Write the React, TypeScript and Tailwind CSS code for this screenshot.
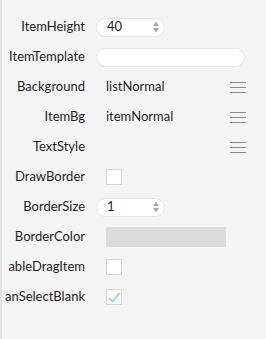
import React from 'react'

const Spinner = ({ value }: { value: string }) => (
  <div className="flex h-[19px] w-[69px] items-center justify-between rounded-full border border-[#e6e6e6] bg-white pl-[10px] pr-[5px]">
    <span>{value}</span>
    <svg width="6" height="12" viewBox="0 0 6 12" className="text-[#a8a8a8]">
      <path d="M3 0.5 L6 5 H0 Z" fill="currentColor" />
      <path d="M3 11.5 L6 7 H0 Z" fill="currentColor" />
    </svg>
  </div>
)

const Menu = () => (
  <div className="ml-auto mr-[20px] flex w-[16px] flex-col gap-[4px]">
    <div className="h-[1px] bg-[#8a8a8a]" />
    <div className="h-[1px] bg-[#8a8a8a]" />
    <div className="h-[1px] bg-[#8a8a8a]" />
  </div>
)

const Check = ({ checked }: { checked?: boolean }) => (
  <div className="ml-[10px] flex h-[16px] w-[16px] items-center justify-center border border-[#d4d4d4] bg-white">
    {checked && (
      <svg width="14" height="14" viewBox="0 0 14 14">
        <path d="M2 8 L5.5 11.5 L12.5 3" fill="none" stroke="#7cc4f0" strokeWidth="1.4" />
      </svg>
    )}
  </div>
)

const Row = ({ label, children }: { label: string; children?: React.ReactNode }) => (
  <div className="flex h-[30px] items-center">
    <div className="w-[83px] shrink-0 whitespace-nowrap text-right">{label}</div>
    <div className="ml-[11px] flex flex-1 items-center">{children}</div>
  </div>
)

export default function App() {
  return (
    <div
      className="h-[339px] w-[266px] border-l-2 border-[#e2e2e2] bg-[#f4f4f4] pt-[12px] text-[13px] text-[#1e1e1e]"
      style={{ fontFamily: 'Lato, "Noto Sans", sans-serif' }}
    >
      <Row label="ItemHeight">
        <Spinner value="40" />
      </Row>
      <Row label="ItemTemplate">
        <div className="h-[19px] w-[149px] rounded-full border border-[#e6e6e6] bg-white" />
      </Row>
      <Row label="Background">
        <span className="pl-[10px]">listNormal</span>
        <Menu />
      </Row>
      <Row label="ItemBg">
        <span className="pl-[10px]">itemNormal</span>
        <Menu />
      </Row>
      <Row label="TextStyle">
        <Menu />
      </Row>
      <Row label="DrawBorder">
        <Check />
      </Row>
      <Row label="BorderSize">
        <Spinner value="1" />
      </Row>
      <Row label="BorderColor">
        <div className="ml-[10px] h-[20px] w-[120px] bg-[#dcdcdc]" />
      </Row>
      <Row label="ableDragItem">
        <Check />
      </Row>
      <Row label="anSelectBlank">
        <Check checked />
      </Row>
    </div>
  )
}
